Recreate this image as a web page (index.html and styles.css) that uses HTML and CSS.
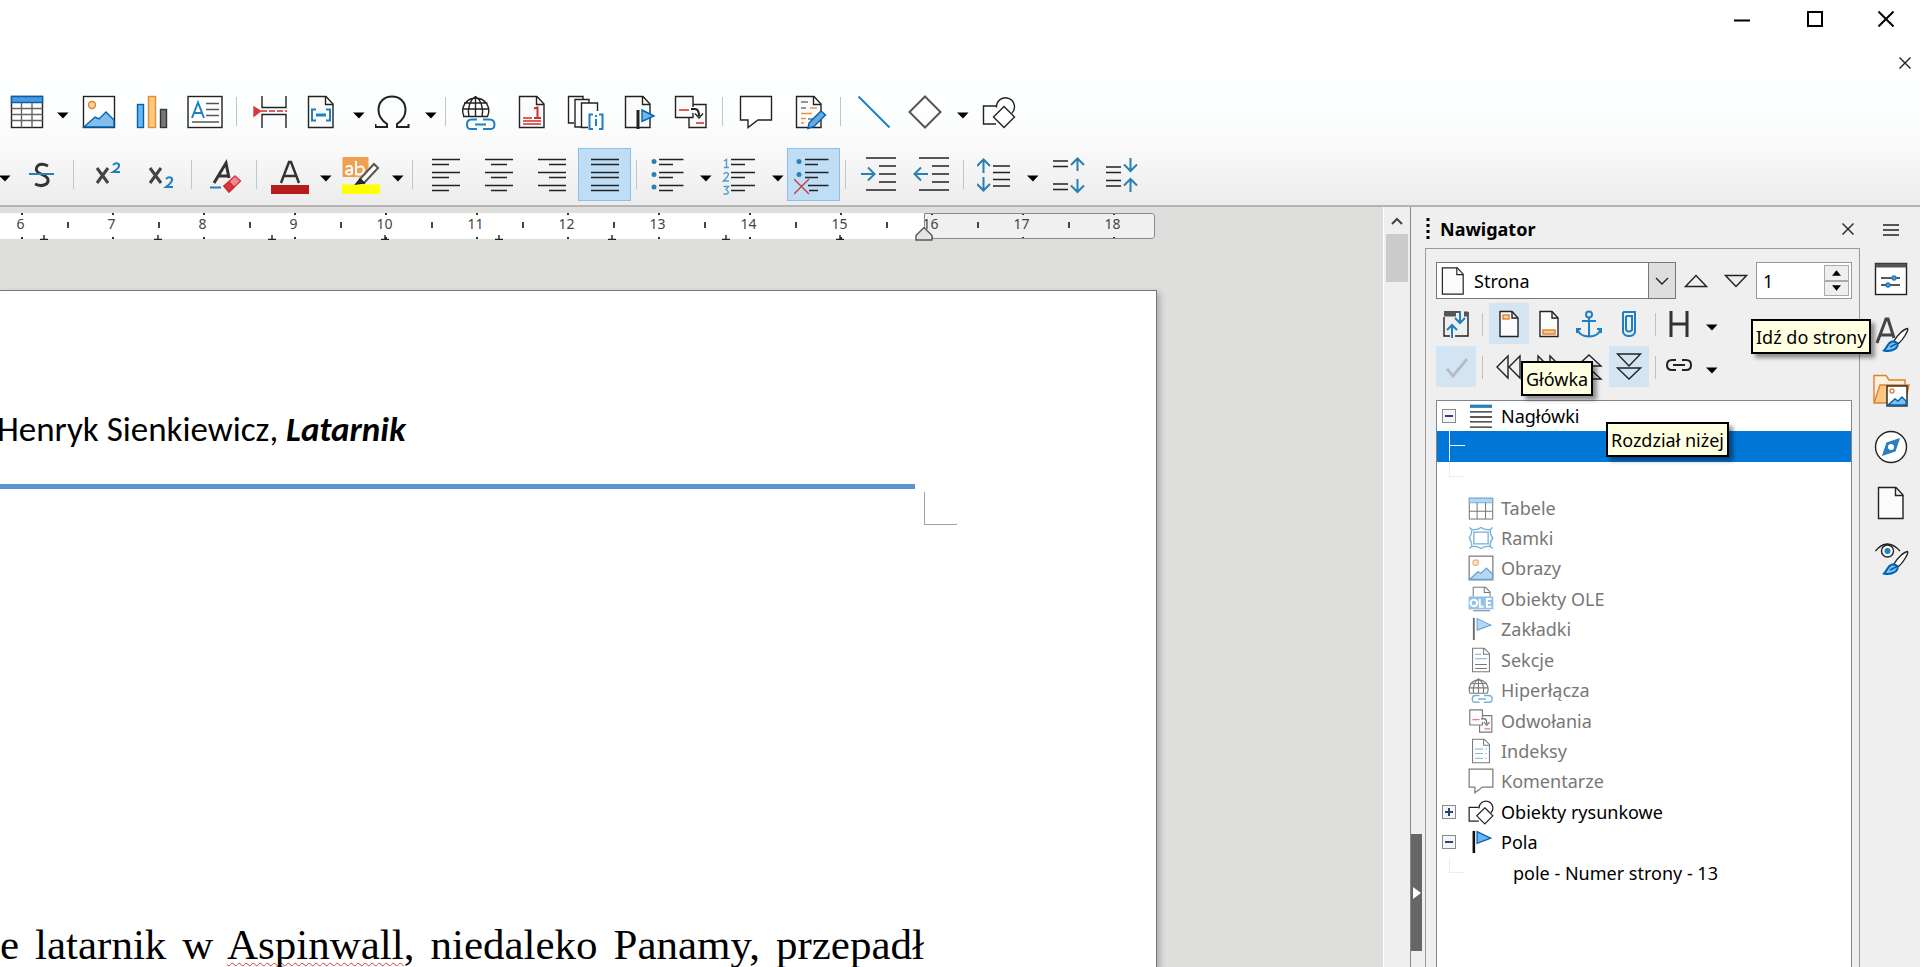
FILE: index.html
```html
<!DOCTYPE html>
<html lang="pl">
<head>
<meta charset="utf-8">
<title>Latarnik</title>
<link rel="stylesheet" href="styles.css">
</head>
<body>
<svg class="defs" aria-hidden="true">
  <symbol id="drop" viewBox="0 0 12 7"><path d="M0 0.5h11.5L6 6.500z" fill="#000" stroke="none"/></symbol>
  <symbol id="page" viewBox="-20 -20 40 40"><path d="M-12.500 -15.500H5L12 -8V15.500H-12.500z" fill="#fbfbfb"/><path d="M4.500 -15.500V-7.500H12"/></symbol>
  <symbol id="brush" viewBox="-20 -20 40 40"><path d="M2 6C5 0 12 -6 15.500 -6.500C17 -5 11 5 6.500 8.500z" fill="#fff"/><path d="M-8 15.500C-4 12 -5 8 0 6.500C3 6 6 8 5.500 11C4 15 -3 17 -8 15.500z" fill="#83beec" stroke="#0063b1" stroke-width="2"/><path d="M-2 12L4 9" stroke="#0063b1"/></symbol>
  <symbol id="shapes" viewBox="-20 -20 40 40"><path d="M-3 -6H-15.500V12H-3"/><path d="M-2.500 -4.500A9 9 0 1 1 13 1" /><path d="M5 -5.500L15.500 5L5 15.500L-5.500 5z" fill="#fff"/></symbol>
  <symbol id="globe" viewBox="-20 -20 40 40"><path d="M-15 4.500A13 13 0 1 1 8.500 4.500M-16 4.500H9M-3.500 -15.500V4.500M-15 -9H8.500M-16.500 -3H9.500M-10 4.500C-12 -3 -9 -12 -3.500 -15.500C2 -12 5 -3 3 4.500"/><path d="M-2 7.500H-7.500Q-12 7.500 -12 12.500T-7.500 17H-2M4 7.500H10.500Q15.500 7.500 15.500 12.500T10.500 17H4M-4 12.500H7" stroke="#1e7fc2" stroke-width="2"/></symbol>
  <symbol id="xref" viewBox="-20 -20 40 40"><path d="M2 -7.500H15V15.500H-2V6" fill="#fbfbfb"/><path d="M2 -5V-15.500H-15.500V5.500H2V1" fill="#fbfbfb"/><path d="M0 -3H4Q8 -3 8 4" stroke-width="2"/><path d="M4 1.500L8 6L12 1.500"/><path d="M-12 -2H-2M5 11H13" stroke="#c9302c"/></symbol>
  <symbol id="comment" viewBox="-20 -20 40 40"><path d="M-15.500 -15.500H15.500V8H2L-8 15.500V8H-15.500z" fill="#fff"/></symbol>
  <symbol id="picture" viewBox="-20 -20 40 40"><rect x="-15.500" y="-15.500" width="31" height="31" fill="#fff"/><circle cx="-7" cy="-7" r="3.500" stroke="#e0812f" fill="#fbd7a0"/><path d="M-15 15L-4 5L0 7L7 0L15 8V15z" fill="#83beec" stroke="#0063b1"/></symbol>
</svg>

<header class="top">
  <div class="titlebar">
    <button class="win" aria-label="Minimalizuj"><svg viewBox="0 0 16 16"><path d="M0 9.500H16"/></svg></button>
    <button class="win" aria-label="Maksymalizuj"><svg viewBox="0 0 16 16"><rect x="1" y="1" width="14" height="14"/></svg></button>
    <button class="win" aria-label="Zamknij"><svg viewBox="0 0 16 16"><path d="M0.500 0.500L15.500 15.500M15.500 0.500L0.500 15.500"/></svg></button>
  </div>
  <div class="menubar">
    <button class="docclose" aria-label="Zamknij dokument"><svg viewBox="0 0 12 12"><path d="M0.500 0.500L11.500 11.500M11.500 0.500L0.500 11.500"/></svg></button>
  </div>

  <div class="toolbar" role="toolbar">
    <button class="tb" aria-label="Tabela"><svg class="ic" viewBox="-20 -20 40 40"><rect x="-15.500" y="-15.500" width="31" height="31" fill="#fff"/><path d="M-15.500 -15.500h31v6h-31z" fill="#4b9be0" stroke="#0a5ca8"/><path d="M-15.500 -3.500h31M-15.500 2.500h31M-15.500 8.500h31M-5.500 -9.500v25M5 -9.500v25" stroke="#666"/></svg></button>
    <button class="dd" aria-label="Więcej"><svg><use href="#drop"/></svg></button>
    <button class="tb" aria-label="Obraz"><svg class="ic"><use href="#picture"/></svg></button>
    <button class="tb" aria-label="Wykres"><svg class="ic" viewBox="-20 -20 40 40"><rect x="-14.500" y="-7.500" width="6" height="23" fill="#6db4f0" stroke="#0063b1"/><rect x="-3.500" y="-15.500" width="7" height="31" fill="#fbc983" stroke="#e0902f"/><rect x="8.500" y="-2.500" width="6" height="18" fill="#797774" stroke="#333"/></svg></button>
    <button class="tb" aria-label="Pole tekstowe"><svg class="ic" viewBox="-20 -20 40 40"><rect x="-17" y="-15.500" width="34" height="31" fill="#fff"/><path d="M-13 6L-7 -9.500L-1 6M-11 1H-3" stroke="#1e7fc2" stroke-width="2"/><path d="M1 -8.500H14M1 -2.500H14M1 3.500H14M-13 10H14" stroke="#555"/></svg></button>
    <span class="sep"></span>
    <button class="tb" aria-label="Podział strony"><svg class="ic" viewBox="-20 -20 40 40"><path d="M-8 -16V-4.500H16V-16M-8 16V2.500H16V16"/><path d="M-9 -1H17" stroke="#c9302c" stroke-dasharray="6 2"/><path d="M-16 -5L-9.500 -1L-16 4z" fill="#d9363e" stroke="#d9363e"/></svg></button>
    <button class="tb" aria-label="Pole"><svg class="ic" viewBox="-18 -20 40 40"><use href="#page" x="-20" y="-20" width="40" height="40"/><path d="M-5 -2.500H-9V8.500H-5M5 -2.500H9V8.500H5" stroke="#1e7fc2" stroke-width="2"/><path d="M-5 3H5" stroke="#1e7fc2" stroke-width="3"/></svg></button>
    <button class="dd" aria-label="Więcej"><svg><use href="#drop"/></svg></button>
    <button class="tb" aria-label="Znak specjalny"><svg class="ic" viewBox="-17 -20 40 40"><path d="M-16.500 12V15H-5V12C-11 8 -13.500 4 -13.500 -2C-13.500 -10 -8 -15.500 0 -15.500S13.500 -10 13.500 -2C13.500 4 11 8 5 12V15H16.500V12" stroke-width="2"/></svg></button>
    <button class="dd" aria-label="Więcej"><svg><use href="#drop"/></svg></button>
    <span class="sep"></span>
    <button class="tb" aria-label="Hiperłącze"><svg class="ic"><use href="#globe"/></svg></button>
    <button class="tb" aria-label="Przypis dolny"><svg class="ic" viewBox="-20 -20 40 40"><use href="#page" x="-20" y="-20" width="40" height="40"/><path d="M2 -3.500L5.500 -4.500V6M2 6H9" stroke="#c9302c" stroke-width="2"/><path d="M-9 6H0M-9 9H9M-9 12H9" stroke="#c9302c"/></svg></button>
    <button class="tb" aria-label="Indeks"><svg class="ic" viewBox="-22 -20 40 40"><path d="M-13 11H-18.500V-15.500H-4V-13M-6 15H-12V-12.500H2V-9" /><path d="M1 15.500H-5.500V-9H10.500V-1" /><path d="M6 2.500H2.500V17H6M12 2.500H15.500V17H12M9 3V5M9 7V14" stroke="#1e7fc2" stroke-width="2"/></svg></button>
    <button class="tb" aria-label="Zakładka"><svg class="ic" viewBox="-20 -20 40 40"><use href="#page" x="-20" y="-20" width="40" height="40"/><path d="M0 -2V17" stroke-width="3"/><path d="M4 -2L16 4L4 9.500z" fill="#6db4f0" stroke="#0063b1"/></svg></button>
    <button class="tb" aria-label="Odsyłacz"><svg class="ic"><use href="#xref"/></svg></button>
    <span class="sep"></span>
    <button class="tb" aria-label="Komentarz"><svg class="ic"><use href="#comment"/></svg></button>
    <button class="tb" aria-label="Śledź zmiany"><svg class="ic" viewBox="-20 -20 40 40"><use href="#page" x="-20" y="-20" width="40" height="40"/><path d="M-8 -10H-1M-8 -4H-3M-1 7H4" stroke="#777"/><path d="M1 -4H8M-8 1.500H3M-8 6.500H-3M-8 11H-5" stroke="#e8954a"/><path d="M0 11L12 -1L16.500 3L5 14.500L-1 16.500z" fill="#6aa9de" stroke="#0063b1"/></svg></button>
    <span class="sep"></span>
    <button class="tb" aria-label="Linia"><svg class="ic" viewBox="-20 -20 40 40"><path d="M-15.500 -15.500L15.500 15.500" stroke="#1e7fc2" stroke-width="2"/></svg></button>
    <button class="tb" aria-label="Kształty"><svg class="ic" viewBox="-18 -20 40 40"><path d="M0 -15.500L15.500 0L0 15.500L-15.500 0z" stroke="#555" stroke-width="2"/></svg></button>
    <button class="dd" aria-label="Więcej"><svg><use href="#drop"/></svg></button>
    <button class="tb" aria-label="Funkcje rysunkowe"><svg class="ic"><use href="#shapes"/></svg></button>
  </div>

  <div class="toolbar format" role="toolbar">
    <button class="dd cut" aria-label="Więcej"><svg><use href="#drop"/></svg></button>
    <button class="tb" aria-label="Przekreślenie"><svg class="ic" viewBox="-20 -20 40 40"><path d="M6 -9Q0 -12 -4 -9.500Q-8 -5 -3 -2L3 1Q8 4 5 8.500Q0 12.500 -7 9" stroke="#333" stroke-width="3"/><path d="M-13 -1H12" stroke="#2a80b0" stroke-width="2"/></svg></button>
    <span class="sep"></span>
    <button class="tb" aria-label="Indeks górny"><svg class="ic" viewBox="-21 -20 40 40"><path d="M-11 -7L0 8M0 -7L-11 8" stroke="#444" stroke-width="3"/><path d="M5 -10Q8 -13 10.500 -11Q13 -8 5 -3H12" stroke="#1e7fc2" stroke-width="2"/></svg></button>
    <button class="tb" aria-label="Indeks dolny"><svg class="ic" viewBox="-21 -20 40 40"><path d="M-11 -7L0 8M0 -7L-11 8" stroke="#444" stroke-width="3"/><path d="M5 4Q8 1 10.500 3Q13 6 5 12H12" stroke="#1e7fc2" stroke-width="2"/></svg></button>
    <span class="sep"></span>
    <button class="tb" aria-label="Wyczyść formatowanie"><svg class="ic" viewBox="-21 -20 40 40"><path d="M-12 8L0 -12L3 3M-7 1H2" stroke="#333" stroke-width="3"/><path d="M-16 12.500H-5" stroke="#1e7fc2" stroke-width="2"/><path d="M-2 11L9 1L14.500 6L3 17z" fill="#f08a92" stroke="#d9363e"/><path d="M-2 11L3 7L8 12L3 17z" fill="#d9363e" stroke="#c9302c"/></svg></button>
    <span class="sep"></span>
    <button class="tb" aria-label="Kolor czcionki"><svg class="ic" viewBox="-20 -20 40 40"><path d="M-9 8L-1 -13H1L9 8M-6 1H6" stroke="#333" stroke-width="2.500"/><path d="M-19 10H19V19H-19z" fill="#b71c1c" stroke="none"/></svg></button>
    <button class="dd" aria-label="Więcej"><svg><use href="#drop"/></svg></button>
    <button class="tb" aria-label="Kolor wyróżnienia"><svg class="ic" viewBox="-19 -20 40 40"><rect x="-18.500" y="-18" width="26" height="20" rx="1" fill="#f0a050" stroke="none"/><path d="M-15 -8Q-9 -11 -9 -6V-1M-9 -5Q-16 -5 -15 -2Q-12 1 -9 -2M-5 -14V0M-5 -7Q2 -11 3 -5Q2 1 -5 -1" stroke="#fff" stroke-width="2"/><path d="M-19 9.500H19V19H-19z" fill="#ffff00" stroke="none"/><path d="M-1 4L13 -11L17 -7L3 8z" fill="#fff" stroke="#555" stroke-width="2"/><path d="M-5 9L-1 4L3 8z" fill="#333"/></svg></button>
    <button class="dd" aria-label="Więcej"><svg><use href="#drop"/></svg></button>
    <span class="sep"></span>
    <button class="tb" aria-label="Wyrównaj do lewej"><svg class="ic" viewBox="-20 -20 40 40"><path d="M-14 -15.500H14M-14 -10.500H3M-14 -2.500H14M-14 2.500H3M-14 10.500H14M-14 15.500H3"/></svg></button>
    <button class="tb" aria-label="Wyśrodkuj"><svg class="ic" viewBox="-20 -20 40 40"><path d="M-14 -15.500H14M-8 -10.500H8M-14 -2.500H14M-8 2.500H8M-14 10.500H14M-8 15.500H8"/></svg></button>
    <button class="tb" aria-label="Wyrównaj do prawej"><svg class="ic" viewBox="-20 -20 40 40"><path d="M-14 -15.500H14M-3 -10.500H14M-14 -2.500H14M-3 2.500H14M-14 10.500H14M-3 15.500H14"/></svg></button>
    <button class="tb on" aria-label="Wyjustuj"><svg class="ic" viewBox="-20 -20 40 40"><path d="M-14 -15.500H14M-14 -10.500H14M-14 -2.500H14M-14 2.500H14M-14 10.500H14M-14 15.500H14"/></svg></button>
    <span class="sep"></span>
    <button class="tb" aria-label="Lista punktowana"><svg class="ic" viewBox="-18 -20 40 40"><path d="M-9 -15.500H15.500M-9 -10.500H5M-9 -2.500H15.500M-9 2.500H5M-9 10.500H15.500M-9 15.500H5"/><g fill="#2a80b0" stroke="none"><circle cx="-14" cy="-13.500" r="2.500"/><circle cx="-14" cy="-0.500" r="2.500"/><circle cx="-14" cy="12" r="2.500"/></g></svg></button>
    <button class="dd" aria-label="Więcej"><svg><use href="#drop"/></svg></button>
    <button class="tb" aria-label="Lista numerowana"><svg class="ic" viewBox="-17 -20 40 40"><path d="M-8 -15.500H16M-8 -10.500H6M-8 -2.500H16M-8 2.500H6M-8 10.500H16M-8 15.500H6"/><path d="M-15 -14L-12.500 -15.500V-7.500M-15 -7.500H-10M-15.500 -1Q-12 -4 -10.500 -1Q-10.500 1 -15.500 6H-10M-15.500 11.500H-10.500L-13 14.500Q-9 17 -12 19H-15.500" stroke="#4a9fd0"/></svg></button>
    <button class="dd" aria-label="Więcej"><svg><use href="#drop"/></svg></button>
    <button class="tb on" aria-label="Bez listy"><svg class="ic" viewBox="-18 -20 40 40"><path d="M-7 -15.500H16.500M-7 -10.500H6M-7 -2.500H16.500M-7 2.500H6M-4 10.500H16.500M-3 15.500H6"/><g fill="#2a80b0" stroke="none"><circle cx="-13" cy="-13.500" r="2.500"/><circle cx="-13" cy="-0.500" r="2.500"/></g><path d="M-18 4L-3 19M-3 4L-18 19" stroke="#c04050"/></svg></button>
    <span class="sep"></span>
    <button class="tb" aria-label="Zwiększ wcięcie"><svg class="ic" viewBox="-20 -20 40 40"><path d="M-13 -17H17M0 -9H17M0 -1H17M0 7H17M-13 15H17"/><path d="M-18 -1H-5M-11 -7.500L-4.500 -1L-11 5.500" stroke="#2a80b0" stroke-width="2"/></svg></button>
    <button class="tb" aria-label="Zmniejsz wcięcie"><svg class="ic" viewBox="-20 -20 40 40"><path d="M-13 -17H17M0 -9H17M0 -1H17M0 7H17M-13 15H17"/><path d="M-17 -1H-4M-11 -7.500L-17.500 -1L-11 5.500" stroke="#2a80b0" stroke-width="2"/></svg></button>
    <span class="sep"></span>
    <button class="tb" aria-label="Odstęp między wierszami"><svg class="ic" viewBox="-16 -20 40 40"><path d="M0 -9H17M0 -2.500H17M0 4.500H17M0 11H17"/><path d="M-9.500 -15V-2M-16 -9L-9.500 -15.500L-3 -9M-9.500 2V15M-16 9L-9.500 15.500L-3 9" stroke="#2a80b0" stroke-width="2"/></svg></button>
    <button class="dd" aria-label="Więcej"><svg><use href="#drop"/></svg></button>
    <button class="tb" aria-label="Zwiększ odstęp"><svg class="ic" viewBox="-20 -20 40 40"><path d="M-16 -14H-1M-16 -8.500H-1M-16 9H-1M-16 14.500H-1"/><path d="M8.500 -16V-4M2 -10L8.500 -16.500L15 -10M8.500 4V16M2 10.500L8.500 17L15 10.500" stroke="#2a80b0" stroke-width="2"/></svg></button>
    <button class="tb" aria-label="Zmniejsz odstęp"><svg class="ic" viewBox="-20 -20 40 40"><path d="M-16 -8H-1M-16 -2.500H-1M-16 5.500H-1M-16 11H-1"/><path d="M8.500 -17V-5M2 -10.500L8.500 -4L15 -10.500M8.500 17V4M2 10.500L8.500 4L15 10.500" stroke="#2a80b0" stroke-width="2"/></svg></button>
  </div>
</header>

<main class="work">
  <section class="doc">
    <div class="ruler">
      <span class="cm">6</span><span class="cm">7</span><span class="cm">8</span><span class="cm">9</span><span class="cm">10</span><span class="cm">11</span><span class="cm">12</span><span class="cm">13</span><span class="cm">14</span><span class="cm">15</span><span class="cm">16</span><span class="cm">17</span><span class="cm">18</span>
      <svg class="stops" viewBox="0 0 924 6"><path d="M40 5.500h8M44 1v4M154 5.500h8M158 1v4M268 5.500h8M272 1v4M381 5.500h8M385 1v4M495 5.500h8M499 1v4M608 5.500h8M612 1v4M722 5.500h8M726 1v4M836 5.500h8M840 1v4"/></svg>
      <svg class="marker" viewBox="0 0 18 14"><path d="M9 0.500L17 8.500V13H1V8.500z"/></svg>
    </div>
    <article class="sheet">
      <p class="running">Henryk Sienkiewicz, <b><i>Latarnik</i></b></p>
      <hr class="rule">
      <div class="corner"></div>
      <p class="body">e latarnik w <span class="typo">Aspinwall</span>, niedaleko Panamy, przepadł</p>
    </article>
  </section>

  <div class="scroll">
    <button class="scrollup" aria-label="W górę"><svg viewBox="0 0 12 10"><path d="M1 8L6 3L11 8"/></svg></button>
    <div class="thumb"></div>
  </div>
  <div class="splitter"><button class="handle" aria-label="Ukryj panel"><svg viewBox="0 0 10 14"><path d="M1 1L9 7L1 13z"/></svg></button></div>

  <aside class="side">
    <div class="head">
      <svg class="grip" viewBox="0 0 4 24"><path d="M0.500 1h3v3h-3zM0.500 7h3v3h-3zM0.500 13h3v3h-3zM0.500 19h3v3h-3z"/></svg>
      <h2>Nawigator</h2>
      <button class="docclose" aria-label="Zamknij panel"><svg viewBox="0 0 12 12"><path d="M0.500 0.500L11.500 11.500M11.500 0.500L0.500 11.500"/></svg></button>
    </div>
    <div class="panel">
      <div class="goto">
        <div class="combo">
          <svg class="ic"><use href="#page"/></svg>
          <select aria-label="Nawiguj według"><option>Strona</option></select>
          <span class="chev"><svg viewBox="0 0 14 8"><path d="M1 1L7 7L13 1"/></svg></span>
        </div>
        <button class="step" aria-label="Poprzednia"><svg class="tri" viewBox="0 0 24 14"><path d="M12 1.500L22.500 12.500H1.500z"/></svg></button>
        <button class="step" aria-label="Następna"><svg class="tri" viewBox="0 0 24 14"><path d="M12 12.500L22.500 1.500H1.500z"/></svg></button>
        <div class="spin">
          <input type="text" value="1" aria-label="Idź do strony">
          <span class="spinbtns">
            <button aria-label="Więcej"><svg viewBox="0 0 10 6"><path d="M0 6L5 0L10 6z"/></svg></button>
            <button aria-label="Mniej"><svg viewBox="0 0 10 6"><path d="M0 0L5 6L10 0z"/></svg></button>
          </span>
        </div>
        <div class="tip tip-page" role="tooltip">Idź do strony</div>
      </div>

      <div class="nav">
        <button class="nb" aria-label="Przełącz widok"><svg class="ic" viewBox="-20 -20 40 40"><path d="M-12 -7V12H-6M-1 12H12V-7M12 -7V-12M-12 -12H3" /><path d="M-12 -10H0M8 -10H12" stroke="#555" stroke-width="5"/><path d="M-4 14V1M-9 6L-4 1L1 6M4 -13V-1M-1 -6L4 -1L9 -6" stroke="#1e7fc2" stroke-width="2"/></svg></button>
        <span class="nsep"></span>
        <button class="nb on" aria-label="Główka"><svg class="ic" viewBox="-20 -20 40 40"><path d="M-9 -12.500H3L9 -6V12.500H-9z" fill="#fbfbfb"/><path d="M3 -12.500V-6H9"/><rect x="-6" y="-9" width="6" height="4" stroke="#e0812f" fill="#fbd7a0"/></svg></button>
        <button class="nb" aria-label="Stopka"><svg class="ic" viewBox="-20 -20 40 40"><path d="M-9 -12.500H3L9 -6V12.500H-9z" fill="#fbfbfb"/><path d="M3 -12.500V-6H9"/><rect x="-6" y="6" width="12" height="4" stroke="#e0812f" fill="#fbc983"/></svg></button>
        <button class="nb" aria-label="Zakotwiczenie"><svg class="ic" viewBox="-20 -20 40 40"><g stroke="#1e7fc2" stroke-width="2"><circle cx="0" cy="-9.500" r="3"/><path d="M0 -6V12M-7 -3H7M-11.500 5C-10 11 -4 12.500 0 12.500S10 11 11.500 5M-12 9V5H-8M12 9V5H8"/></g></svg></button>
        <button class="nb" aria-label="Przypomnienie"><svg class="ic" viewBox="-20 -20 40 40"><path d="M-3 6V-8M-6 -12H6V8Q5 12 0 12T-6 8V-12M-3 6Q0 9 3 6V-8H-3" stroke="#1e7fc2" stroke-width="2"/></svg></button>
        <span class="nsep"></span>
        <button class="nb" aria-label="Poziom nagłówka"><svg class="ic" viewBox="-17 -20 40 40"><path d="M-8 -13V13M8 -13V13M-8 0H8" stroke="#333" stroke-width="3"/></svg></button>
        <button class="dd" aria-label="Więcej"><svg><use href="#drop"/></svg></button>
      </div>

      <div class="nav">
        <button class="nb on" aria-label="Pole zawartości"><svg class="ic" viewBox="-20 -20 40 40"><path d="M-9 2L-3 9L11 -8" stroke="#b8bcc0" stroke-width="3"/></svg></button>
        <span class="nsep"></span>
        <button class="nb" aria-label="Poziom wyżej"><svg class="ic" viewBox="-20 -20 40 40"><path d="M-1 -11V11L-12 0zM11 -11V11L0 0z"/></svg></button>
        <button class="nb" aria-label="Poziom niżej"><svg class="ic" viewBox="-20 -20 40 40"><path d="M-11 -11V11L0 0zM1 -11V11L12 0z"/></svg></button>
        <button class="nb" aria-label="Rozdział wyżej"><svg class="ic" viewBox="-20 -20 40 40"><path d="M0 -12L12 -1H-12zM0 1L12 12H-12z"/></svg></button>
        <button class="nb on" aria-label="Rozdział niżej"><svg class="ic" viewBox="-20 -20 40 40"><path d="M-11.500 -13H11.500L0 -1zM-11.500 1H11.500L0 12z"/></svg></button>
        <span class="nsep"></span>
        <button class="nb" aria-label="Tryb przeciągania"><svg class="ic" viewBox="-17 -20 40 40"><path d="M-3 -7H-7Q-12 -7 -12 -2T-7 3H-3M3 -7H7Q12 -7 12 -2T7 3H3M-6 -2H6" stroke-width="2"/></svg></button>
        <button class="dd" aria-label="Więcej"><svg><use href="#drop"/></svg></button>
        <div class="tip tip-header" role="tooltip">Główka</div>
      </div>

      <div class="tree">
        <ul class="items">
          <li><span class="exp minus"></span><svg class="ti" viewBox="-20 -20 40 40"><path d="M-17 -15H17" stroke="#2a80b0" stroke-width="5"/><path d="M-17 -6.500H17M-17 1.500H17M-17 9H17M-17 17H17" stroke-width="2"/></svg>Nagłówki</li>
          <li class="sel"><span class="branch"></span></li>
          <li><span class="branch"></span></li>
          <li class="off"><span class="exp"></span><svg class="ti" viewBox="-20 -20 40 40"><rect x="-18" y="-15" width="36" height="32"/><path d="M-18 -15H18V-8H-18z" fill="#83beec" stroke="#1e7fc2"/><path d="M-18 5H18M-6 -8V17M7 -8V17"/></svg>Tabele</li>
          <li class="off"><span class="exp"></span><svg class="ti" viewBox="-20 -20 40 40"><g stroke="#1e7fc2" stroke-width="2"><rect x="-11" y="-9" width="22" height="18"/><path d="M-18 -16L-14 -13Q-5 -12 0 -16Q5 -12 14 -13L18 -16M18 16L14 13Q5 12 0 16Q-5 12 -14 13L-18 16M14 -13Q14 -5 18 0Q14 5 14 13M-14 13Q-14 5 -18 0Q-14 -5 -14 -13"/></g></svg>Ramki</li>
          <li class="off"><span class="exp"></span><svg class="ti" viewBox="-17 -17 34 34"><use href="#picture" x="-20" y="-20" width="40" height="40"/></svg>Obrazy</li>
          <li class="off"><span class="exp"></span><svg class="ti" viewBox="-20 -20 40 40"><path d="M-12 -4V-18H7L14 -11V-4M5 -18V-10H14M-12 18H14"/><path d="M-19 -4H19V16H-19z" fill="#4b9be0" stroke="none"/><g stroke="#fff" stroke-width="3"><circle cx="-11" cy="6" r="5"/><path d="M-2 0V12H4M16 0H9V12H16M9 6H15"/></g></svg>Obiekty OLE</li>
          <li class="off"><span class="exp"></span><svg class="ti" viewBox="-20 -20 40 40"><path d="M-11 -17V17" stroke="#111" stroke-width="3"/><path d="M-6 -16L15 -6L-6 2z" fill="#83beec" stroke="#0063b1"/></svg>Zakładki</li>
          <li class="off"><span class="exp"></span><svg class="ti" viewBox="-20 -20 40 40"><path d="M-13 -18H5L13 -10V18H-13zM4 -18V-9H13M-9 7H9M-9 13H9"/><path d="M-9 -9H0M-9 -2H9" stroke="#1e7fc2"/></svg>Sekcje</li>
          <li class="off"><span class="exp"></span><svg class="ti" viewBox="-18 -18 36 36"><use href="#globe" x="-20" y="-20" width="40" height="40"/></svg>Hiperłącza</li>
          <li class="off"><span class="exp"></span><svg class="ti" viewBox="-18 -18 36 36"><use href="#xref" x="-20" y="-20" width="40" height="40"/></svg>Odwołania</li>
          <li class="off"><span class="exp"></span><svg class="ti" viewBox="-20 -20 40 40"><path d="M-13 -18H5L13 -10V18H-13zM4 -18V-9H13"/><path d="M-9 -3H3M7 -3H9M-9 4H3M7 4H9M-9 11H3M7 11H9" stroke="#1e7fc2"/></svg>Indeksy</li>
          <li class="off"><span class="exp"></span><svg class="ti" viewBox="-17 -17 34 34"><use href="#comment" x="-20" y="-20" width="40" height="40"/></svg>Komentarze</li>
          <li><span class="exp plus"></span><svg class="ti" viewBox="-17 -17 34 34"><use href="#shapes" x="-20" y="-20" width="40" height="40"/></svg>Obiekty rysunkowe</li>
          <li><span class="exp minus"></span><svg class="ti" viewBox="-20 -20 40 40"><path d="M-11 -17V17" stroke="#111" stroke-width="4"/><path d="M-6 -16L15 -6L-6 2z" fill="#6db4f0" stroke="#0063b1" stroke-width="2"/></svg>Pola</li>
          <li class="leaf"><span class="branch"></span>pole - Numer strony - 13</li>
        </ul>
        <div class="tip tip-chapter" role="tooltip">Rozdział niżej</div>
      </div>
    </div>
  </aside>

  <nav class="tabs">
    <button class="burger" aria-label="Ustawienia panelu"><svg viewBox="0 0 16 12"><path d="M0 1H16M0 6H16M0 11H16"/></svg></button>
    <button class="tab" aria-label="Właściwości"><svg class="ic" viewBox="-20 -20 40 40"><rect x="-15.500" y="-15.500" width="31" height="31" fill="#fff"/><path d="M-15.500 -13.500H15.500" stroke="#555" stroke-width="4"/><path d="M-10 -1H9M-10 6H9"/><g fill="#4b9be0" stroke="#1e7fc2"><circle cx="3" cy="-1" r="2"/><circle cx="-3" cy="6" r="2"/></g></svg></button>
    <button class="tab" aria-label="Style"><svg class="ic" viewBox="-20 -20 40 40"><path d="M-14 8L-5 -16H-3L3 3M-11 0H2" stroke="#444" stroke-width="3"/><use href="#brush" x="-19" y="-20" width="40" height="40"/></svg></button>
    <button class="tab" aria-label="Galeria"><svg class="ic" viewBox="-20 -20 40 40"><path d="M-17 11V-15.500H-5L-2 -11H14V-6" stroke="#e0812f" fill="#fdf0dc"/><path d="M-17 12L-11 -6H18L14 12z" stroke="#e0812f" fill="#fbc983"/><rect x="-4" y="-5" width="20" height="20" fill="#fff"/><circle cx="1" cy="0" r="2" stroke="#e0812f"/><path d="M-3 14L4 8L7 10L11 6L15 10V14z" fill="#83beec" stroke="#0063b1"/></svg></button>
    <button class="tab" aria-label="Nawigator"><svg class="ic" viewBox="-20 -20 40 40"><circle r="15.500" fill="#fff"/><path d="M8 -8L4 4L-8 8L-4 -4z" fill="#2a80c0" stroke="#2a80c0"/><circle r="3" fill="#fff" stroke="none"/></svg></button>
    <button class="tab" aria-label="Strona"><svg class="ic"><use href="#page"/></svg></button>
    <button class="tab" aria-label="Inspektor stylów"><svg class="ic" viewBox="-20 -20 40 40"><path d="M-15.500 -8Q-4 -22 9 -8"/><circle cx="-3.500" cy="-8" r="6" fill="#fff"/><circle cx="-3.500" cy="-8" r="3" fill="#1e7fc2" stroke="none"/><use href="#brush" x="-19" y="-21" width="40" height="40"/></svg></button>
  </nav>
</main>
</body>
</html>
```

FILE: styles.css
```css
* { box-sizing: border-box; }

body {
  margin: 0;
  height: 100vh;
  display: flex;
  flex-direction: column;
  overflow: hidden;
  background: #efefef;
  color: #000;
  font: 18px/24px "Noto Sans", "Open Sans", sans-serif;
}

button {
  display: flex;
  align-items: center;
  justify-content: center;
  flex: none;
  margin: 0;
  padding: 0;
  border: 0;
  background: none;
}

svg { flex: none; fill: none; stroke: #222; stroke-width: 1.4; }
.defs { display: none; }
.ic { width: 40px; height: 40px; }

/* Title bar and toolbars */
.top {
  flex: none;
  background: linear-gradient(#fff 0, #fdfefe 110px, #f9f9f9 150px, #ececec 205px);
  border-bottom: 2px solid #b4b4b2;
  padding-bottom: 4px;
}
.titlebar { display: flex; justify-content: flex-end; height: 38px; }
.win { width: 74px; }
.win:first-child { width: 72px; }
.win:last-child { width: 68px; }
.win svg { width: 16px; height: 16px; stroke: #000; stroke-width: 2; }
.menubar { display: flex; justify-content: flex-end; height: 47px; padding: 14px 0 11px; }
.docclose { width: 30px; }
.docclose svg { width: 12px; height: 12px; }
.toolbar { display: flex; height: 53px; }
.format { margin-top: 10px; }
.tb { width: 53px; height: 53px; }
.tb.on { background: #bfdef6; border: 1px solid #8cc0e6; }
.dd { width: 19px; padding-top: 8px; }
.dd svg { width: 12px; height: 7px; }
.dd.cut { width: 15px; padding-right: 5px; }
.sep { flex: none; width: 12px; padding: 12px 5px; }
.sep::before { content: ""; display: block; width: 1px; height: 29px; background: #c4c4c4; }

/* Work area */
.work { flex: 1; display: flex; min-height: 0; }
.doc { flex: 1; min-width: 0; overflow: hidden; background: #dededc; padding-top: 6px; }

.ruler {
  position: relative;
  display: flex;
  width: 1155px;
  height: 26px;
  background: linear-gradient(90deg, #fff 924px, #f0f0f1 924px);
}
.ruler::after {
  content: "";
  position: absolute;
  inset: 0 0 0 924px;
  border: 1px solid #8a8a8a;
  border-radius: 0 3px 3px 0;
}
.cm {
  flex: none;
  position: relative;
  width: 91px;
  padding-right: 4px;
  text-align: center;
  font-size: 14px;
  line-height: 22px;
  color: #444;
}
.cm:first-child { margin-left: -23px; }
.cm::before {
  content: "";
  position: absolute;
  inset: 0 44px;
  border: solid #333;
  border-width: 2px 0;
  width: 2px;
}
.cm::after {
  content: "";
  position: absolute;
  right: -1px;
  top: 9px;
  width: 2px;
  height: 6px;
  background: #444;
}
.cm:last-of-type::after { display: none; }
.stops { position: absolute; left: 0; bottom: -1px; width: 924px; height: 6px; }
.marker { position: absolute; left: 915px; bottom: -2px; z-index: 1; width: 18px; height: 14px; fill: #e4e4e2; stroke: #555; }

.sheet {
  width: 1157px;
  height: 100%;
  margin-top: 51px;
  padding-top: 118px;
  background: #fff;
  border: solid #777;
  border-width: 1px 1px 0 0;
  box-shadow: 3px 3px 6px #aaa;
}
.sheet p { margin: 0; white-space: nowrap; }
.sheet .running { margin-left: -3px; font: 35px/40px Carlito, Calibri, Lato, sans-serif; }
.rule { width: 915px; height: 5px; margin: 35px 0 0; border: 0; background: #5b95cb; }
.corner { width: 33px; height: 33px; margin: 3px 0 0 924px; border: solid #a0a0a0; border-width: 0 0 1px 1px; }
.sheet .body {
  width: 924px;
  margin-top: 395px;
  font: 43px/50px "Liberation Serif", serif;
  text-align: justify;
  text-align-last: justify;
  white-space: normal;
}
.typo { text-decoration: underline wavy #d04040 1px; text-underline-offset: 3px; text-decoration-skip-ink: none; }

.scroll { flex: none; width: 28px; background: #efefef; border-right: 1px solid #888; border-left: 1px solid #fff; }
.scrollup { width: 100%; height: 27px; }
.scrollup svg { width: 12px; height: 10px; stroke: #444; stroke-width: 2; }
.thumb { height: 48px; margin: 0 2px; background: #cbcbcb; }

.splitter { flex: none; width: 14px; padding-top: 627px; }
.handle { width: 11px; height: 117px; background: #666; }
.handle svg { width: 10px; height: 14px; fill: #fff; stroke: none; }

/* Navigator panel */
.side { flex: none; width: 435px; display: flex; flex-direction: column; }
.head { display: flex; align-items: center; height: 41px; padding: 2px 0 0 1px; }
.grip { width: 4px; height: 24px; fill: #000; stroke: none; }
.head h2 { flex: 1; margin: 0 0 0 10px; font-size: 18px; line-height: 24px; }
.head .docclose { margin-right: -3px; }
.panel {
  flex: 1;
  min-height: 0;
  display: flex;
  flex-direction: column;
  padding: 13px 7px 0 10px;
  border: solid #9a9a9a;
  border-width: 1px 1px 0;
}
.goto { position: relative; display: flex; height: 37px; }
.combo { display: flex; align-items: center; width: 240px; background: #fff; border: 1px solid #777; }
.combo .ic { width: 34px; height: 34px; margin-left: -1px; }
.combo select {
  flex: 1;
  appearance: none;
  border: 0;
  padding: 0 4px;
  background: none;
  color: #000;
  font: inherit;
}
.chev { display: flex; align-items: center; justify-content: center; width: 27px; height: 100%; background: #dedede; border-left: 1px solid #777; }
.chev svg { width: 14px; height: 8px; }
.step { width: 40px; }
.tri { width: 24px; height: 14px; }
.spin { display: flex; width: 96px; background: #fff; border: 1px solid #999; padding: 2px; }
.spin input { flex: 1; min-width: 0; padding: 0 4px; border: 0; outline: 0; font: inherit; }
.spinbtns { display: flex; flex-direction: column; width: 25px; }
.spinbtns button { flex: 1; background: #efefef; border: 1px solid #aaa; }
.spinbtns svg { width: 9px; height: 6px; fill: #000; stroke: none; }

.nav { position: relative; display: flex; height: 41px; margin-top: 4px; }
.nav + .nav { margin-top: 2px; }
.nb { width: 40px; }
.nb.on { background: #d3e4f2; }
.nsep { flex: none; width: 13px; padding: 10px 6px; }
.nsep::before { content: ""; display: block; width: 1px; height: 23px; background: #c0c0c0; }

.tree { position: relative; flex: 1; min-height: 0; margin-top: 13px; background: #fff; border: solid #82858c; border-width: 1px 1px 0; }
.items {
  display: grid;
  grid-auto-rows: 1fr;
  height: 487px;
  margin: 0;
  padding: 0;
  list-style: none;
}
.items li { display: flex; align-items: center; padding-left: 5px; }
.items .sel { background: #0077d7; }
.off { color: #777; }
.off .ti { opacity: 0.6; }
.ti { width: 26px; height: 26px; margin: 0 7px 0 12px; stroke-width: 1.600; }
.exp { width: 14px; height: 14px; }
.minus, .plus {
  border: 1px solid #8a8a8a;
  background: linear-gradient(#2b3f7a, #2b3f7a) center / 8px 2px no-repeat, #f6f6f6;
}
.plus { background: linear-gradient(#2b3f7a, #2b3f7a) center / 8px 2px no-repeat, linear-gradient(#2b3f7a, #2b3f7a) center / 2px 8px no-repeat, #f6f6f6; }
.branch { align-self: flex-start; width: 16px; height: 15px; margin-left: 7px; border: solid #ececec; border-width: 0 0 1px 1px; }
.sel .branch { position: relative; border-color: #fff; }
.sel .branch::after { content: ""; position: absolute; left: -1px; top: 14px; height: 16px; border-left: 1px solid #fff; }
.leaf { gap: 48px; }

.tip {
  position: absolute;
  z-index: 2;
  height: 35px;
  padding: 0 3px;
  border: 2px solid #000;
  background: #ffffe1;
  box-shadow: 4px 4px 4px rgba(0, 0, 0, 0.4);
  line-height: 32px;
  white-space: nowrap;
}
.tip-page { left: 315px; top: 57px; }
.tip-header { left: 85px; top: 15px; }
.tip-chapter { left: 169px; top: 21px; }

/* Tab bar */
.tabs { flex: none; width: 60px; padding-left: 2px; }
.tabs button { width: 100%; }
.burger { height: 44px; padding-top: 2px; }
.burger svg { width: 16px; height: 12px; }
.tab { height: 56px; }
```
